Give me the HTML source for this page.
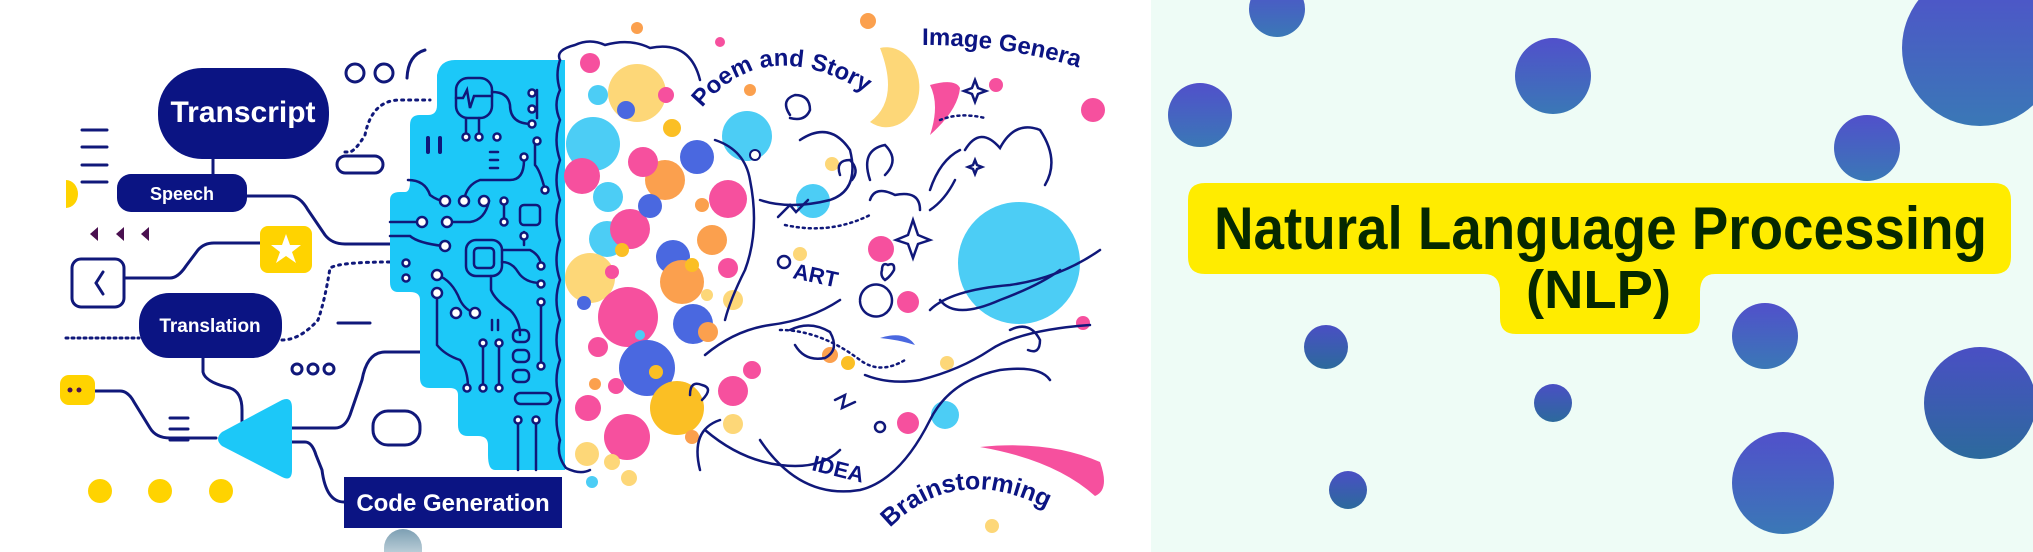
<!DOCTYPE html>
<html><head><meta charset="utf-8"><style>
html,body{margin:0;padding:0;width:2033px;height:552px;overflow:hidden;background:#fff}
svg{display:block}
</style></head><body>
<svg width="2033" height="552" viewBox="0 0 2033 552" xmlns="http://www.w3.org/2000/svg" font-family="Liberation Sans, sans-serif">
<defs>
<linearGradient id="g" x1="0" y1="0" x2="0" y2="1"><stop offset="0" stop-color="#5150cb"/><stop offset="1" stop-color="#3a78b6"/></linearGradient>
<linearGradient id="g2" x1="0" y1="0" x2="0" y2="1"><stop offset="0" stop-color="#4a4fc4"/><stop offset="1" stop-color="#2c6a9c"/></linearGradient>
<linearGradient id="gb" x1="0" y1="0" x2="0" y2="1"><stop offset="0" stop-color="#7d9fb3"/><stop offset="1" stop-color="#b8ccd6"/></linearGradient>
<path id="poem" d="M702,108 Q770,25 885,105"/>
<path id="img" d="M922,45 Q1030,45 1118,82"/>
<path id="brain" d="M890,528 Q965,452 1075,525"/>
</defs>
<rect x="0" y="0" width="1151" height="552" fill="#fff"/>
<rect x="1151" y="0" width="882" height="552" fill="#eefcf6"/>

<g fill="url(#g)">
<circle cx="1277" cy="9" r="28"/>
<circle cx="1553" cy="76" r="38"/>
<circle cx="1200" cy="115" r="32"/>
<circle cx="1980" cy="48" r="78"/>
<circle cx="1867" cy="148" r="33"/>
<circle cx="1765" cy="336" r="33"/>
<circle cx="1783" cy="483" r="51"/>
</g>
<g fill="url(#g2)">
<circle cx="1326" cy="347" r="22"/>
<circle cx="1553" cy="403" r="19"/>
<circle cx="1980" cy="403" r="56"/>
<circle cx="1348" cy="490" r="19"/>
</g>
<path d="M1205,183 H1994 Q2011,183 2011,200 V257 Q2011,274 1994,274 H1715 Q1700,274 1700,292 V318 Q1700,334 1684,334 H1516 Q1500,334 1500,318 V292 Q1500,274 1484,274 H1205 Q1188,274 1188,257 V200 Q1188,183 1205,183 Z" fill="#ffec00"/>
<text x="1214" y="249" font-size="60" font-weight="bold" fill="#052800" textLength="773" lengthAdjust="spacingAndGlyphs">Natural Language Processing</text>
<text x="1526" y="308" font-size="54" font-weight="bold" fill="#052800" textLength="145" lengthAdjust="spacingAndGlyphs">(NLP)</text>

<g stroke="#10187a" stroke-width="3" fill="none" stroke-linecap="round">
<path d="M82,130H107M82,147H107M82,165H107M82,182H107"/>
<path d="M170,418H188M170,429H188M170,440H188"/>
<path d="M213,159V174"/>
<path d="M247,196H290Q300,196 308,210L325,235Q332,244 345,244H390"/>
<path d="M124,278H170Q178,278 186,266L198,250Q204,243 214,243H260"/>
<path d="M203,358V372Q205,382 230,388Q242,392 242,410V440"/>
<path d="M95,391H120Q128,391 134,402L150,428Q156,438 170,438H216"/>
<path d="M290,428H335Q345,428 350,415L362,380Q367,352 385,352H420"/>
<path d="M290,442H305Q312,442 316,455L322,470Q326,502 344,502"/>
<path d="M345,152H350Q356,150 365,135Q372,100 400,100H430" stroke-dasharray="2 5"/>
<path d="M282,340Q300,340 318,320Q325,300 330,268Q340,262 390,262" stroke-dasharray="2 5"/>
<path d="M66,338H139" stroke-dasharray="2 4"/>
<path d="M338,323H370"/>
<path d="M425,50Q408,55 407,78"/>
<rect x="72" y="259" width="52" height="48" rx="9"/>
<path d="M103,272L96,283L103,294"/>
<circle cx="355" cy="73" r="9"/><circle cx="384" cy="73" r="9"/>
<circle cx="297" cy="369" r="5"/><circle cx="313" cy="369" r="5"/><circle cx="329" cy="369" r="5"/>
<rect x="337" y="156" width="46" height="17" rx="8.5"/>
<rect x="373" y="411" width="47" height="34" rx="15"/>
</g>
<g fill="#4a1050"><path d="M90,234L98,227V241Z"/><path d="M116,234L124,227V241Z"/><path d="M141,234L149,227V241Z"/></g>
<path d="M66,180A12,14 0 0 1 66,208Z" fill="#ffd300"/>
<rect x="60" y="375" width="35" height="30" rx="9" fill="#ffd300"/>
<circle cx="70" cy="390" r="2.5" fill="#4a1050"/><circle cx="79" cy="390" r="2.5" fill="#4a1050"/>
<g fill="#ffd300"><circle cx="100" cy="491" r="12"/><circle cx="160" cy="491" r="12"/><circle cx="221" cy="491" r="12"/></g>
<rect x="260" y="226" width="52" height="47" rx="8" fill="#ffd300"/>
<path d="M286,234L290,245L301,245L292,252L296,263L286,256L276,263L280,252L271,245L282,245Z" fill="#fff"/>
<path d="M222,432L282,400Q292,396 292,408V470Q292,482 282,477L222,446Q214,439 222,432Z" fill="#1cc8f8"/>

<rect x="158" y="68" width="171" height="91" rx="44" fill="#0b1483"/>
<text x="243" y="122" font-size="30" font-weight="bold" fill="#fff" text-anchor="middle">Transcript</text>
<rect x="117" y="174" width="130" height="38" rx="14" fill="#0b1483"/>
<text x="182" y="200" font-size="18" font-weight="bold" fill="#fff" text-anchor="middle">Speech</text>
<rect x="139" y="293" width="143" height="65" rx="30" fill="#0b1483"/>
<text x="210" y="332" font-size="19" font-weight="bold" fill="#fff" text-anchor="middle">Translation</text>
<rect x="344" y="477" width="218" height="51" fill="#0b1483"/>
<text x="453" y="511" font-size="24" font-weight="bold" fill="#fff" text-anchor="middle">Code Generation</text>

<path d="M455,60H565V470H495Q488,470 488,455V445Q488,436 478,436H468Q458,436 458,425V395Q458,388 450,388H430Q420,388 420,378V300Q420,292 410,292H398Q390,292 390,282V200Q390,192 400,192H405Q410,192 410,182V125Q410,115 420,115H428Q437,115 437,105V75Q440,60 455,60Z" fill="#1cc8f8"/>
<g stroke="#10187a" stroke-width="2.5" fill="none" stroke-linecap="round">
<rect x="456" y="78" width="36" height="40" rx="12"/>
<path d="M456,98H463L467,90L470,108L474,96H492"/>
<path d="M466,118V136M479,118V136"/>
<path d="M492,92Q508,92 510,105Q510,124 532,124"/>
<path d="M428,138V152M440,138V152" stroke-width="4"/>
<path d="M490,152H498M490,160H498M490,168H498"/>
<path d="M408,180Q425,180 430,195Q438,201 445,201"/>
<path d="M464,201Q466,185 480,180H510Q524,180 524,160V158"/>
<path d="M489,201Q485,220 470,222H447"/>
<path d="M390,222H420"/>
<path d="M390,236H410Q418,243 443,246"/>
<path d="M504,201V222"/>
<rect x="520" y="205" width="20" height="20" rx="4"/>
<rect x="466" y="240" width="36" height="36" rx="10"/><rect x="474" y="248" width="20" height="20" rx="4"/>
<path d="M502,250H530Q540,255 541,265"/>
<path d="M502,262Q512,262 518,272Q525,283 541,283"/>
<path d="M524,232V245"/>
<path d="M537,90V118"/>
<path d="M535,140V165Q540,170 545,190"/>
<path d="M491,276V290Q495,300 510,310Q520,320 520,335"/>
<path d="M437,275Q452,280 460,300Q465,310 475,313"/>
<path d="M437,293V345Q445,355 460,360Q468,370 468,388"/>
<path d="M483,343V388M499,343V388"/>
<path d="M541,303V365"/>
<path d="M492,320V330M498,320V330"/>
<rect x="513" y="330" width="16" height="12" rx="5"/><rect x="513" y="350" width="16" height="12" rx="5"/><rect x="513" y="370" width="16" height="12" rx="5"/>
<rect x="515" y="393" width="36" height="11" rx="5.5"/>
<path d="M518,420V470M536,420V470"/>
</g>
<g fill="#fff" stroke="#10187a" stroke-width="2.5">
<circle cx="532" cy="93" r="3.5"/><circle cx="532" cy="109" r="3.5"/><circle cx="532" cy="124" r="3.5"/>
<circle cx="466" cy="137" r="3.5"/><circle cx="479" cy="137" r="3.5"/><circle cx="497" cy="137" r="3.5"/>
<circle cx="524" cy="157" r="3.5"/><circle cx="537" cy="141" r="3.5"/><circle cx="545" cy="190" r="3.5"/>
<circle cx="445" cy="201" r="5"/><circle cx="464" cy="201" r="5"/><circle cx="484" cy="201" r="5"/><circle cx="504" cy="201" r="3.5"/><circle cx="504" cy="222" r="3.5"/>
<circle cx="422" cy="222" r="5"/><circle cx="447" cy="222" r="5"/><circle cx="445" cy="246" r="5"/>
<circle cx="524" cy="236" r="3.5"/><circle cx="541" cy="266" r="3.5"/><circle cx="541" cy="284" r="3.5"/><circle cx="541" cy="302" r="3.5"/><circle cx="541" cy="366" r="3.5"/>
<circle cx="406" cy="263" r="3.5"/><circle cx="406" cy="278" r="3.5"/>
<circle cx="437" cy="275" r="5"/><circle cx="437" cy="293" r="5"/><circle cx="456" cy="313" r="5"/><circle cx="475" cy="313" r="5"/>
<circle cx="483" cy="343" r="3.5"/><circle cx="499" cy="343" r="3.5"/><circle cx="467" cy="388" r="3.5"/><circle cx="483" cy="388" r="3.5"/><circle cx="499" cy="388" r="3.5"/>
<circle cx="518" cy="420" r="3.5"/><circle cx="536" cy="420" r="3.5"/>
</g>
<path d="M384,552V548A19,19 0 0 1 422,548V552Z" fill="url(#gb)"/>

<g>
<circle cx="637" cy="93" r="29" fill="#fdd778"/>
<circle cx="593" cy="144" r="27" fill="#4ccdf5"/>
<circle cx="582" cy="176" r="18" fill="#f6509e"/>
<circle cx="665" cy="180" r="20" fill="#fba04e"/>
<circle cx="697" cy="157" r="17" fill="#4a68e0"/>
<circle cx="643" cy="162" r="15" fill="#f6509e"/>
<circle cx="608" cy="197" r="15" fill="#4ccdf5"/>
<circle cx="607" cy="239" r="18" fill="#4ccdf5"/>
<circle cx="630" cy="229" r="20" fill="#f6509e"/>
<circle cx="650" cy="206" r="12" fill="#4a68e0"/>
<circle cx="728" cy="199" r="19" fill="#f6509e"/>
<circle cx="590" cy="278" r="25" fill="#fdd778"/>
<circle cx="673" cy="257" r="17" fill="#4a68e0"/>
<circle cx="682" cy="282" r="22" fill="#fba04e"/>
<circle cx="628" cy="317" r="30" fill="#f6509e"/>
<circle cx="693" cy="324" r="20" fill="#4a68e0"/>
<circle cx="647" cy="368" r="28" fill="#4a68e0"/>
<circle cx="677" cy="408" r="27" fill="#fbbf24"/>
<circle cx="627" cy="437" r="23" fill="#f6509e"/>
<circle cx="733" cy="391" r="15" fill="#f6509e"/>
<circle cx="747" cy="136" r="25" fill="#4ccdf5"/>
<circle cx="813" cy="201" r="17" fill="#4ccdf5"/>
<circle cx="590" cy="63" r="10" fill="#f6509e"/>
<circle cx="587" cy="454" r="12" fill="#fdd778"/>
<circle cx="712" cy="240" r="15" fill="#fba04e"/>
<circle cx="588" cy="408" r="13" fill="#f6509e"/>
<circle cx="598" cy="95" r="10" fill="#4ccdf5"/><circle cx="626" cy="110" r="9" fill="#4a68e0"/>
<circle cx="666" cy="95" r="8" fill="#f6509e"/><circle cx="672" cy="128" r="9" fill="#fbbf24"/>
<circle cx="584" cy="303" r="7" fill="#4a68e0"/><circle cx="640" cy="335" r="5" fill="#4ccdf5"/>
<circle cx="598" cy="347" r="10" fill="#f6509e"/><circle cx="656" cy="372" r="7" fill="#fbbf24"/>
<circle cx="612" cy="272" r="7" fill="#f6509e"/><circle cx="622" cy="250" r="7" fill="#fbbf24"/>
<circle cx="692" cy="265" r="7" fill="#fbbf24"/><circle cx="707" cy="295" r="6" fill="#fdd778"/>
<circle cx="728" cy="268" r="10" fill="#f6509e"/><circle cx="733" cy="300" r="10" fill="#fdd778"/>
<circle cx="595" cy="384" r="6" fill="#fba04e"/><circle cx="616" cy="386" r="8" fill="#f6509e"/>
<circle cx="612" cy="462" r="8" fill="#fdd778"/><circle cx="592" cy="482" r="6" fill="#4ccdf5"/><circle cx="629" cy="478" r="8" fill="#fdd778"/>
<circle cx="702" cy="205" r="7" fill="#fba04e"/><circle cx="692" cy="437" r="7" fill="#fba04e"/>
<circle cx="637" cy="28" r="6" fill="#fba04e"/><circle cx="720" cy="42" r="5" fill="#f6509e"/><circle cx="750" cy="90" r="6" fill="#fba04e"/>
<circle cx="755" cy="155" r="5" fill="#fff" stroke="#10187a" stroke-width="2"/>
<circle cx="708" cy="332" r="10" fill="#fba04e"/><circle cx="733" cy="424" r="10" fill="#fdd778"/>
<circle cx="830" cy="355" r="8" fill="#fba04e"/><circle cx="752" cy="370" r="9" fill="#f6509e"/>
<circle cx="868" cy="21" r="8" fill="#fba04e"/>
<path d="M880,48A33,40 0 1 1 870,122Q900,100 880,48Z" fill="#fdd778"/>
<circle cx="1019" cy="263" r="61" fill="#4ccdf5"/>
<circle cx="996" cy="85" r="7" fill="#f6509e"/>
<circle cx="1093" cy="110" r="12" fill="#f6509e"/>
<circle cx="881" cy="249" r="13" fill="#f6509e"/>
<circle cx="908" cy="302" r="11" fill="#f6509e"/>
<circle cx="1083" cy="323" r="7" fill="#f6509e"/>
<circle cx="945" cy="415" r="14" fill="#4ccdf5"/>
<circle cx="908" cy="423" r="11" fill="#f6509e"/>
<circle cx="848" cy="363" r="7" fill="#fbbf24"/>
<circle cx="947" cy="363" r="7" fill="#fdd778"/>
<circle cx="992" cy="526" r="7" fill="#fdd778"/>
<circle cx="832" cy="164" r="7" fill="#fdd778"/>
<circle cx="800" cy="254" r="7" fill="#fdd778"/>
</g>
<path d="M930,85Q955,78 960,88Q958,110 930,135Q940,105 930,85Z" fill="#f6509e"/>
<path d="M880,338Q905,330 915,345Q900,340 880,338Z" fill="#4a68e0"/>
<path d="M980,447Q1050,440 1100,462Q1110,490 1095,496Q1055,460 980,447Z" fill="#f6509e"/>

<g stroke="#10187a" stroke-width="2.5" fill="none" stroke-linecap="round">
<path d="M560,60Q555,50 575,45Q590,38 605,45Q630,38 650,48Q690,40 700,80"/>
<path d="M560,60Q555,75 560,90Q553,105 560,120Q553,140 560,160Q553,180 560,200Q553,220 560,240Q553,260 560,280Q553,300 560,320Q553,340 560,360Q553,380 560,400Q553,420 560,440Q556,455 566,468Q580,475 590,470"/>
<path d="M715,140Q745,150 750,180Q760,230 745,270Q730,300 725,320"/>
<path d="M705,355Q735,330 770,325Q810,320 840,300"/>
<path d="M690,395Q690,380 702,385Q714,388 702,400"/>
<path d="M705,430Q740,460 780,465Q820,470 840,450"/>
<path d="M760,440Q800,500 860,490Q900,480 930,420Q950,380 1000,370Q1040,365 1050,380"/>
<path d="M800,140Q830,120 850,150Q860,190 830,200Q790,210 760,200"/>
<path d="M790,115Q780,100 795,95Q810,95 810,110Q805,122 790,118"/>
<path d="M840,175Q835,160 850,160Q860,170 852,180"/>
<path d="M870,180Q860,150 885,145Q900,160 885,175"/>
<path d="M870,200Q875,185 895,195Q920,190 920,210"/>
<path d="M930,190Q940,160 960,150M930,210Q945,200 955,180"/>
<path d="M965,150Q980,125 1000,148Q1015,120 1040,130Q1060,160 1045,185"/>
<path d="M930,310Q950,290 1010,285Q1060,278 1100,250"/>
<path d="M940,300Q955,320 1000,300Q1040,285 1060,270"/>
<path d="M790,330Q810,320 830,332Q840,350 825,358Q805,362 795,345"/>
<path d="M860,300A16,16 0 1 1 860,301"/>
<path d="M865,375Q890,385 920,380Q960,370 990,350Q1020,330 1090,325"/>
<path d="M1010,330Q1030,320 1040,340Q1040,355 1028,350"/>
<path d="M913,220L918,235L930,240L918,244L913,258L908,244L896,240L908,235Z"/>
<path d="M975,80L978,88L986,91L978,94L975,102L972,94L964,91L972,88Z"/>
<path d="M975,160L977,165L982,167L977,169L975,174L973,169L968,167L973,165Z"/>
<path d="M882,270Q882,262 888,265Q895,262 894,270Q890,277 885,280Q880,276 882,270Z"/>
<path d="M778,217L790,205L796,212L808,200"/>
<path d="M835,400L845,395L842,408L855,402"/>
<path d="M785,225Q830,235 870,215" stroke-dasharray="2 4"/>
<path d="M780,330Q820,330 860,360Q880,375 905,360" stroke-dasharray="2 4"/>
<path d="M940,120Q960,112 985,118" stroke-dasharray="2 4"/>
<path d="M700,470Q690,430 720,420"/>
</g>
<g font-weight="bold" fill="#0b1483">
<text font-size="24"><textPath href="#poem">Poem and Story</textPath></text>
<text font-size="24"><textPath href="#img">Image Genera</textPath></text>
<text font-size="25"><textPath href="#brain">Brainstorming</textPath></text>
<text x="792" y="278" font-size="22" transform="rotate(12 792 278)">ART</text>
<text x="811" y="470" font-size="22" transform="rotate(14 811 470)">IDEA</text>
</g>
<circle cx="784" cy="262" r="6" fill="none" stroke="#10187a" stroke-width="2.5"/>
<circle cx="880" cy="427" r="5" fill="none" stroke="#10187a" stroke-width="2.5"/>
</svg>
</body></html>
